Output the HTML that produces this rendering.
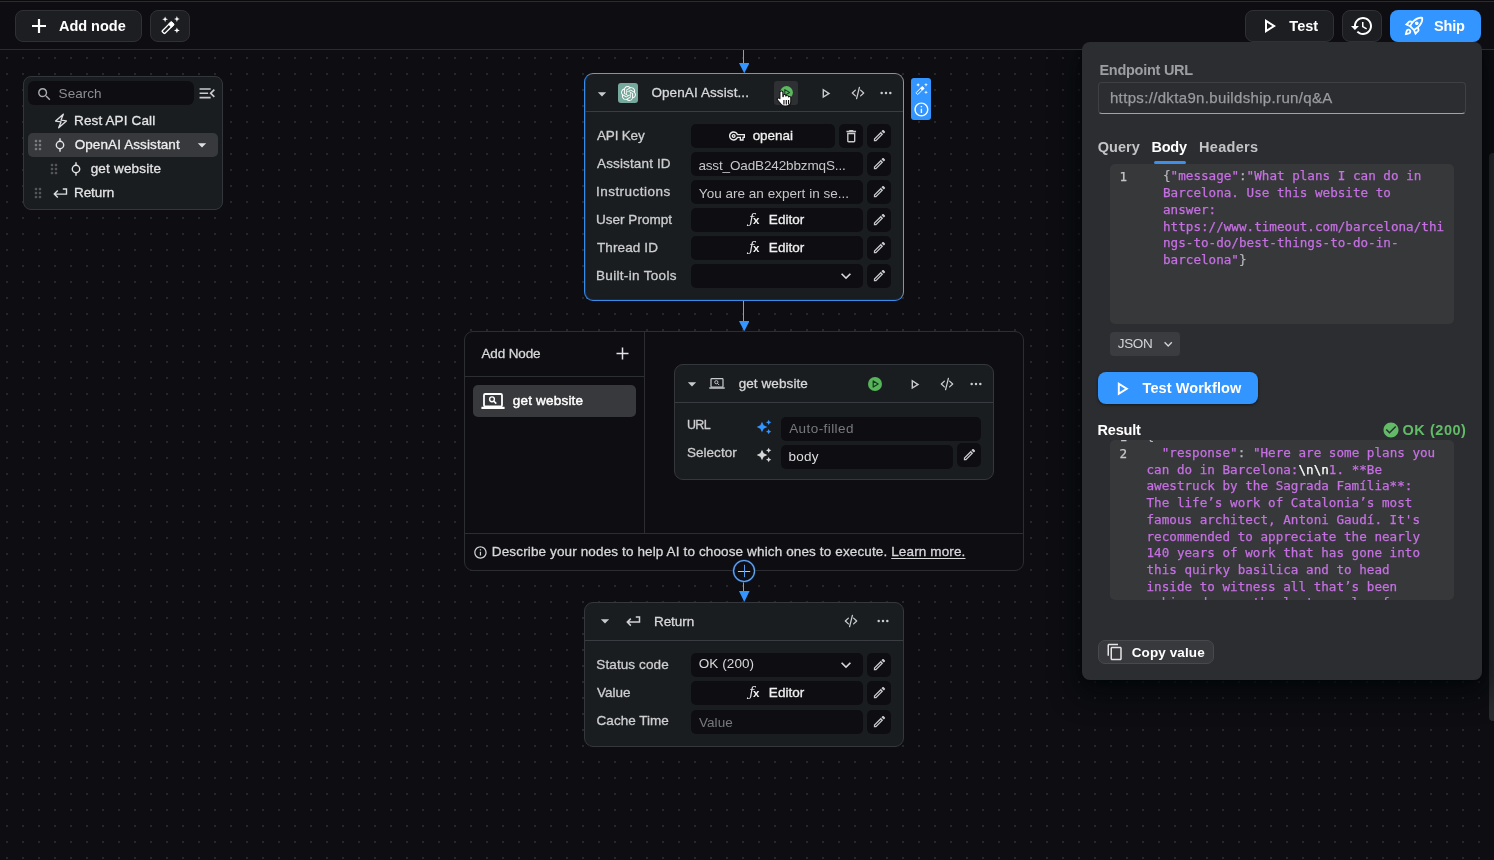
<!DOCTYPE html>
<html lang="en"><head><meta charset="utf-8"><title>Workflow builder</title>
<style>
html,body{margin:0;padding:0;}
body{width:1494px;height:860px;overflow:hidden;background:#0e0e12;font-family:"Liberation Sans", sans-serif;position:relative;}
#root{position:absolute;left:0;top:0;width:1494px;height:860px;will-change:transform;}
.a{position:absolute;display:block;}
.t{position:absolute;white-space:pre;line-height:1;}
.code{position:absolute;white-space:pre;font-family:"DejaVu Sans Mono", "Liberation Mono", monospace;font-size:12.600px;line-height:17px;letter-spacing:0.015px;-webkit-text-stroke:0.250px currentColor;}
#canvas{background-color:#0e0e12;background-image:radial-gradient(circle at 1px 1px,#26272c 0.800px,transparent 1.250px);background-size:16px 16px;background-position:6px 7px;}
</style></head>
<body>
<div id="root">
<div class="a" id="canvas" style="left:0;top:50px;width:1494px;height:810px;"></div>
<div class="a" style="left:23px;top:76px;width:200px;height:134px;background:#1a1d20;border-radius:8px;border:1px solid #33363a;box-sizing:border-box;"></div>
<div class="a" style="left:28px;top:81px;width:166px;height:24px;background:#0e0e12;border-radius:6px;"></div>
<svg class="a" style="left:35.7px;top:85.5px;" width="16.8" height="16.8" viewBox="0 0 24 24"><path d="M15.5 14h-.79l-.28-.27C15.41 12.59 16 11.11 16 9.5 16 5.91 13.09 3 9.5 3S3 5.91 3 9.5 5.91 16 9.5 16c1.61 0 3.09-.59 4.23-1.57l.27.28v.79l5 4.99L20.49 19l-4.99-5zm-6 0C7.01 14 5 11.99 5 9.5S7.01 5 9.5 5 14 7.01 14 9.5 11.99 14 9.5 14z" fill="#a9abae"/></svg>
<span class="t" id="t1" style="left:58.61px;top:87px;font-size:13.5px;font-weight:400;color:#8b8d91;letter-spacing:0.046px;">Search</span>
<svg class="a" style="left:197.4px;top:82.9px;" width="20.5" height="20.5" viewBox="0 0 24 24"><path d="M3 18h13v-2H3v2zm0-5h10v-2H3v2zm0-7v2h13V6H3zm18 9.590L17.420 12 21 8.410 19.590 7l-5 5 5 5L21 15.590z" fill="#c9cacc"/></svg>
<div class="a" style="left:28px;top:133px;width:190px;height:24px;background:#38393c;border-radius:5px;"></div>
<svg class="a" style="left:53.5px;top:113px;" width="14" height="16" viewBox="0 0 14 16"><path d="M9.300 1.200 1.600 8.100 7.100 8.800 4.700 14.800 12.400 7.900 6.900 7.200z" fill="none" stroke="#dcdddf" stroke-width="1.350" stroke-linejoin="round"/></svg>
<span class="t" id="t2" style="left:74.00px;top:114px;font-size:13.5px;font-weight:400;color:#e3e4e5;letter-spacing:0.139px;-webkit-text-stroke:0.3px #e3e4e5;">Rest API Call</span>
<svg class="a" style="left:30px;top:137px;" width="16" height="16" viewBox="0 0 24 24"><path d="M11 18c0 1.100-.9 2-2 2s-2-.9-2-2 .9-2 2-2 2 .9 2 2zm-2-8c-1.100 0-2 .9-2 2s.9 2 2 2 2-.9 2-2-.9-2-2-2zm0-6c-1.100 0-2 .9-2 2s.9 2 2 2 2-.9 2-2-.9-2-2-2zm6 4c1.100 0 2-.9 2-2s-.9-2-2-2-2 .9-2 2 .9 2 2 2zm0 2c-1.100 0-2 .9-2 2s.9 2 2 2 2-.9 2-2-.9-2-2-2zm0 6c-1.100 0-2 .9-2 2s.9 2 2 2 2-.9 2-2-.9-2-2-2z" fill="#7b7d81"/></svg>
<svg class="a" style="left:52.3px;top:137px;" width="16" height="16" viewBox="0 0 16 16"><circle cx="8" cy="8" r="3.700" fill="none" stroke="#e3e4e5" stroke-width="1.400"/><path d="M8 1.200v3.100M8 11.700v3.100" stroke="#e3e4e5" stroke-width="1.400"/></svg>
<span class="t" id="t3" style="left:74.68px;top:138px;font-size:13.5px;font-weight:400;color:#eeeeef;letter-spacing:0.097px;-webkit-text-stroke:0.3px #eeeeef;">OpenAI Assistant</span>
<svg class="a" style="left:191.7px;top:134.9px;" width="20" height="20" viewBox="0 0 24 24"><path d="M7 10l5 5 5-5z" fill="#e0e0e2"/></svg>
<svg class="a" style="left:45.7px;top:161px;" width="16" height="16" viewBox="0 0 24 24"><path d="M11 18c0 1.100-.9 2-2 2s-2-.9-2-2 .9-2 2-2 2 .9 2 2zm-2-8c-1.100 0-2 .9-2 2s.9 2 2 2 2-.9 2-2-.9-2-2-2zm0-6c-1.100 0-2 .9-2 2s.9 2 2 2 2-.9 2-2-.9-2-2-2zm6 4c1.100 0 2-.9 2-2s-.9-2-2-2-2 .9-2 2 .9 2 2 2zm0 2c-1.100 0-2 .9-2 2s.9 2 2 2 2-.9 2-2-.9-2-2-2zm0 6c-1.100 0-2 .9-2 2s.9 2 2 2 2-.9 2-2-.9-2-2-2z" fill="#55575b"/></svg>
<svg class="a" style="left:68.2px;top:160.8px;" width="16" height="16" viewBox="0 0 16 16"><circle cx="8" cy="8" r="3.700" fill="none" stroke="#e3e4e5" stroke-width="1.400"/><path d="M8 1.200v3.100M8 11.700v3.100" stroke="#e3e4e5" stroke-width="1.400"/></svg>
<span class="t" id="t4" style="left:90.64px;top:162px;font-size:13.5px;font-weight:400;color:#e3e4e5;letter-spacing:0.197px;-webkit-text-stroke:0.3px #e3e4e5;">get website</span>
<svg class="a" style="left:30px;top:185px;" width="16" height="16" viewBox="0 0 24 24"><path d="M11 18c0 1.100-.9 2-2 2s-2-.9-2-2 .9-2 2-2 2 .9 2 2zm-2-8c-1.100 0-2 .9-2 2s.9 2 2 2 2-.9 2-2-.9-2-2-2zm0-6c-1.100 0-2 .9-2 2s.9 2 2 2 2-.9 2-2-.9-2-2-2zm6 4c1.100 0 2-.9 2-2s-.9-2-2-2-2 .9-2 2 .9 2 2 2zm0 2c-1.100 0-2 .9-2 2s.9 2 2 2 2-.9 2-2-.9-2-2-2zm0 6c-1.100 0-2 .9-2 2s.9 2 2 2 2-.9 2-2-.9-2-2-2z" fill="#55575b"/></svg>
<svg class="a" style="left:53px;top:187.7px;" width="15" height="11" viewBox="0 0 15 11"><path d="M9.800 1h3.700v5.100H1.400M4.800 2.600 1.300 6.100 4.800 9.600" fill="none" stroke="#dcdddf" stroke-width="1.4" stroke-linejoin="miter"/></svg>
<span class="t" id="t5" style="left:74.00px;top:186px;font-size:13.5px;font-weight:400;color:#e3e4e5;letter-spacing:-0.073px;-webkit-text-stroke:0.3px #e3e4e5;">Return</span>
<div class="a" style="left:743px;top:50px;width:1px;height:13px;background:#9a9c9f;"></div>
<svg class="a" style="left:738.9000000000001px;top:63.0px;" width="10.5" height="10.3" viewBox="0 0 10.500 10.300"><path d="M0 0h10.500L5.250 10.300z" fill="#3395ff"/></svg>
<div class="a" style="left:743px;top:301px;width:1px;height:20px;background:#9a9c9f;"></div>
<svg class="a" style="left:738.9000000000001px;top:321.0px;" width="10.5" height="10.3" viewBox="0 0 10.500 10.300"><path d="M0 0h10.500L5.250 10.300z" fill="#3395ff"/></svg>
<div class="a" style="left:584px;top:73px;width:320px;height:228px;background:#1a1d20;border-radius:9px;border:1px solid #3a8ae8;box-sizing:border-box;border-top-color:#8d9094;border-right-color:#8d9094;box-shadow:inset 1px 0 0 #0d3a78, inset 0 -1px 0 rgba(13,58,120,0.5);"></div>
<div class="a" style="left:585px;top:111px;width:318px;height:1px;background:#393c40;"></div>
<svg class="a" style="left:592px;top:83.5px;" width="20" height="20" viewBox="0 0 24 24"><path d="M7 10l5 5 5-5z" fill="#c9cacc"/></svg>
<div class="a" style="left:618px;top:83px;width:20px;height:20px;background:#76a99b;border-radius:3px;"></div>
<svg class="a" style="left:620.8px;top:85.5px;" width="15" height="15" viewBox="0 0 24 24"><path d="M22.2819 9.8211a5.9847 5.9847 0 0 0-.5157-4.9108 6.0462 6.0462 0 0 0-6.5098-2.9A6.0651 6.0651 0 0 0 4.9807 4.1818a5.9847 5.9847 0 0 0-3.9977 2.9 6.0462 6.0462 0 0 0 .7427 7.0966 5.98 5.98 0 0 0 .511 4.9107 6.051 6.051 0 0 0 6.5146 2.9001A5.9847 5.9847 0 0 0 13.2599 24a6.0557 6.0557 0 0 0 5.7718-4.2058 5.9894 5.9894 0 0 0 3.9977-2.9001 6.0557 6.0557 0 0 0-.7475-7.0729zm-9.022 12.6081a4.4755 4.4755 0 0 1-2.8764-1.0408l.1419-.0804 4.7783-2.7582a.7948.7948 0 0 0 .3927-.6813v-6.7369l2.02 1.1686a.071.071 0 0 1 .038.052v5.5826a4.504 4.504 0 0 1-4.4945 4.4944zm-9.6607-4.1254a4.4708 4.4708 0 0 1-.5346-3.0137l.142.0852 4.783 2.7582a.7712.7712 0 0 0 .7806 0l5.8428-3.3685v2.3324a.0804.0804 0 0 1-.0332.0615L9.74 19.9502a4.4992 4.4992 0 0 1-6.1408-1.6464zM2.3408 7.8956a4.485 4.485 0 0 1 2.3655-1.9728V11.6a.7664.7664 0 0 0 .3879.6765l5.8144 3.3543-2.0201 1.1685a.0757.0757 0 0 1-.071 0l-4.8303-2.7865A4.504 4.504 0 0 1 2.3408 7.872zm16.5963 3.8558L13.1038 8.364 15.1192 7.2a.0757.0757 0 0 1 .071 0l4.8303 2.7913a4.4944 4.4944 0 0 1-.6765 8.1042v-5.6772a.79.79 0 0 0-.407-.667zm2.0107-3.0231l-.142-.0852-4.7735-2.7818a.7759.7759 0 0 0-.7854 0L9.409 9.2297V6.8974a.0662.0662 0 0 1 .0284-.0615l4.8303-2.7866a4.4992 4.4992 0 0 1 6.6802 4.66zM8.3065 12.863l-2.02-1.1638a.0804.0804 0 0 1-.038-.0567V6.0742a4.4992 4.4992 0 0 1 7.3757-3.4537l-.142.0805L8.704 5.459a.7948.7948 0 0 0-.3927.6813zm1.0976-2.3654l2.602-1.4998 2.6069 1.4998v2.9994l-2.5974 1.4997-2.6067-1.4997Z" fill="#ffffff"/></svg>
<span class="t" id="t6" style="left:651.39px;top:86px;font-size:13.5px;font-weight:400;color:#d7d8da;letter-spacing:0.103px;-webkit-text-stroke:0.3px #d7d8da;">OpenAI Assist...</span>
<div class="a" style="left:774px;top:81px;width:24px;height:24px;background:#2e3033;border-radius:3px;"></div>
<svg class="a" style="left:780.4px;top:85.6px;" width="13" height="13" viewBox="0 0 13 13"><circle cx="6.500" cy="6.500" r="6.400" fill="#5cb860"/><path d="M4.800 3.600v5.800L9.600 6.500z" fill="none" stroke="#1e3d20" stroke-width="1.100" stroke-linejoin="round"/></svg>
<svg class="a" style="left:775.5px;top:89.5px;" width="17.5" height="17.3" viewBox="0 0 17 20" preserveAspectRatio="none"><path d="M5.200 1.200c.9 0 1.500.6 1.500 1.500v5l.3 0v-1.200c0-.8.600-1.300 1.300-1.300s1.300.5 1.300 1.300v.7c.1-.6.600-1 1.200-1 .7 0 1.300.5 1.300 1.300v.6c.2-.4.600-.7 1.100-.7.700 0 1.200.5 1.200 1.300v4.500c0 3.200-1.800 5.300-4.900 5.300H9c-2 0-3.200-.8-4.300-2.400L1.500 11.600c-.5-.7-.4-1.500.2-2 .6-.4 1.400-.3 1.900.3l.2.300V2.700c0-.9.600-1.500 1.400-1.500z" fill="#fff" stroke="#111" stroke-width="1.100" stroke-linejoin="round"/><path d="M7.700 11.500v5.300M10 11.500v5.300M12.200 11.500v5.300" stroke="#111" stroke-width="1.100"/></svg>
<svg class="a" style="left:817.2px;top:84.89999999999999px;" width="16.8" height="16.8" viewBox="0 0 24 24"><path d="M10 8.64L15.27 12 10 15.36V8.64M8 5v14l11-7L8 5z" fill="#c9cacc"/></svg>
<svg class="a" style="left:851px;top:86.3px;" width="14" height="14" viewBox="0 0 14 14"><path d="M4.400 4.100 1.300 7l3.100 2.900M9.600 4.100 12.700 7l-3.100 2.900M8.400 1.300 5.600 12.700" fill="none" stroke="#c9cacc" stroke-width="1.300" stroke-linecap="round" stroke-linejoin="round"/></svg>
<svg class="a" style="left:880px;top:91.3px;" width="12" height="4" viewBox="0 0 12 4"><circle cx="1.700" cy="2" r="1.250" fill="#c9cacc"/><circle cx="6" cy="2" r="1.250" fill="#c9cacc"/><circle cx="10.300" cy="2" r="1.250" fill="#c9cacc"/></svg>
<div class="a" style="left:911px;top:78px;width:20px;height:42px;background:#3395ff;border-radius:3px;"></div>
<svg class="a" style="left:911.85px;top:79.85px;" width="18.76" height="18.76" viewBox="0 0 28 28"><g transform="translate(11.850 15.850) rotate(-45)"><rect x="-6.600" y="-1.850" width="13.200" height="3.700" rx="0.700" fill="none" stroke="#ffffff" stroke-width="1.350"/><rect x="2.600" y="-2.400" width="4.650" height="4.800" rx="0.700" fill="#ffffff"/></g><path d="M9.1 4.4L9.88 6.52L12.0 7.3L9.88 8.08L9.1 10.2L8.32 8.08L6.199999999999999 7.3L8.32 6.52Z" fill="#ffffff"/><path d="M20.9 4.1L21.68 6.22L23.799999999999997 7.0L21.68 7.78L20.9 9.9L20.12 7.78L18.0 7.0L20.12 6.22Z" fill="#ffffff"/><path d="M20.9 15.499999999999998L21.68 17.62L23.799999999999997 18.4L21.68 19.18L20.9 21.299999999999997L20.12 19.18L18.0 18.4L20.12 17.62Z" fill="#ffffff"/></svg>
<svg class="a" style="left:912.6px;top:100.7px;" width="16.8" height="16.8" viewBox="0 0 24 24"><path d="M11 7h2v2h-2zm0 4h2v6h-2zm1-9C6.48 2 2 6.48 2 12s4.48 10 10 10 10-4.48 10-10S17.52 2 12 2zm0 18c-4.410 0-8-3.590-8-8s3.590-8 8-8 8 3.590 8 8-3.590 8-8 8z" fill="#ffffff"/></svg>
<span class="t" id="t7" style="left:597.00px;top:129px;font-size:13.5px;font-weight:400;color:#cdced0;letter-spacing:-0.179px;-webkit-text-stroke:0.3px #cdced0;">API Key</span>
<div class="a" style="left:691px;top:124px;width:144px;height:24px;background:#0e0e12;border-radius:5px;"></div>
<div class="a" style="left:839px;top:124px;width:24px;height:24px;background:#0e0e12;border-radius:5px;"></div>
<svg class="a" style="left:842.7px;top:127.9px;" width="16.5" height="16.5" viewBox="0 0 24 24"><path d="M16 9v10H8V9h8m-1.500-6h-5l-1 1H5v2h14V4h-3.500l-1-1zM18 7H6v12c0 1.100.9 2 2 2h8c1.100 0 2-.9 2-2V7z" fill="#c9cacc"/></svg>
<div class="a" style="left:867px;top:124px;width:24px;height:24px;background:#0e0e12;border-radius:5px;"></div>
<svg class="a" style="left:871.7px;top:128.3px;" width="15" height="15" viewBox="0 0 24 24"><path d="M14.06 9.02l.92.92L5.92 19H5v-.92l9.06-9.06M17.66 3c-.25 0-.51.1-.7.29l-1.83 1.83 3.75 3.75 1.83-1.83c.39-.39.39-1.02 0-1.41l-2.34-2.34c-.2-.2-.45-.29-.71-.29zm-3.6 3.19L3 17.25V21h3.75L17.81 9.94l-3.75-3.75z" fill="#c9cacc"/></svg>
<span class="t" id="t8" style="left:597.00px;top:157px;font-size:13.5px;font-weight:400;color:#cdced0;letter-spacing:0.140px;-webkit-text-stroke:0.3px #cdced0;">Assistant ID</span>
<div class="a" style="left:691px;top:152px;width:172px;height:24px;background:#0e0e12;border-radius:5px;"></div>
<div class="a" style="left:867px;top:152px;width:24px;height:24px;background:#0e0e12;border-radius:5px;"></div>
<svg class="a" style="left:871.7px;top:156.3px;" width="15" height="15" viewBox="0 0 24 24"><path d="M14.06 9.02l.92.92L5.92 19H5v-.92l9.06-9.06M17.66 3c-.25 0-.51.1-.7.29l-1.83 1.83 3.75 3.75 1.83-1.83c.39-.39.39-1.02 0-1.41l-2.34-2.34c-.2-.2-.45-.29-.71-.29zm-3.6 3.19L3 17.25V21h3.75L17.81 9.94l-3.75-3.75z" fill="#c9cacc"/></svg>
<span class="t" id="t9" style="left:596.00px;top:185px;font-size:13.5px;font-weight:400;color:#cdced0;letter-spacing:0.464px;-webkit-text-stroke:0.3px #cdced0;">Instructions</span>
<div class="a" style="left:691px;top:180px;width:172px;height:24px;background:#0e0e12;border-radius:5px;"></div>
<div class="a" style="left:867px;top:180px;width:24px;height:24px;background:#0e0e12;border-radius:5px;"></div>
<svg class="a" style="left:871.7px;top:184.3px;" width="15" height="15" viewBox="0 0 24 24"><path d="M14.06 9.02l.92.92L5.92 19H5v-.92l9.06-9.06M17.66 3c-.25 0-.51.1-.7.29l-1.83 1.83 3.75 3.75 1.83-1.83c.39-.39.39-1.02 0-1.41l-2.34-2.34c-.2-.2-.45-.29-.71-.29zm-3.6 3.19L3 17.25V21h3.75L17.81 9.94l-3.75-3.75z" fill="#c9cacc"/></svg>
<span class="t" id="t10" style="left:596.00px;top:213px;font-size:13.5px;font-weight:400;color:#cdced0;letter-spacing:0.021px;-webkit-text-stroke:0.3px #cdced0;">User Prompt</span>
<div class="a" style="left:691px;top:208px;width:172px;height:24px;background:#0e0e12;border-radius:5px;"></div>
<div class="a" style="left:867px;top:208px;width:24px;height:24px;background:#0e0e12;border-radius:5px;"></div>
<svg class="a" style="left:871.7px;top:212.3px;" width="15" height="15" viewBox="0 0 24 24"><path d="M14.06 9.02l.92.92L5.92 19H5v-.92l9.06-9.06M17.66 3c-.25 0-.51.1-.7.29l-1.83 1.83 3.75 3.75 1.83-1.83c.39-.39.39-1.02 0-1.41l-2.34-2.34c-.2-.2-.45-.29-.71-.29zm-3.6 3.19L3 17.25V21h3.75L17.81 9.94l-3.75-3.75z" fill="#c9cacc"/></svg>
<span class="t" id="t11" style="left:597.00px;top:241px;font-size:13.5px;font-weight:400;color:#cdced0;letter-spacing:0.112px;-webkit-text-stroke:0.3px #cdced0;">Thread ID</span>
<div class="a" style="left:691px;top:236px;width:172px;height:24px;background:#0e0e12;border-radius:5px;"></div>
<div class="a" style="left:867px;top:236px;width:24px;height:24px;background:#0e0e12;border-radius:5px;"></div>
<svg class="a" style="left:871.7px;top:240.3px;" width="15" height="15" viewBox="0 0 24 24"><path d="M14.06 9.02l.92.92L5.92 19H5v-.92l9.06-9.06M17.66 3c-.25 0-.51.1-.7.29l-1.83 1.83 3.75 3.75 1.83-1.83c.39-.39.39-1.02 0-1.41l-2.34-2.34c-.2-.2-.45-.29-.71-.29zm-3.6 3.19L3 17.25V21h3.75L17.81 9.94l-3.75-3.75z" fill="#c9cacc"/></svg>
<span class="t" id="t12" style="left:596.00px;top:269px;font-size:13.5px;font-weight:400;color:#cdced0;letter-spacing:0.320px;-webkit-text-stroke:0.3px #cdced0;">Built-in Tools</span>
<div class="a" style="left:691px;top:264px;width:172px;height:24px;background:#0e0e12;border-radius:5px;"></div>
<div class="a" style="left:867px;top:264px;width:24px;height:24px;background:#0e0e12;border-radius:5px;"></div>
<svg class="a" style="left:871.7px;top:268.3px;" width="15" height="15" viewBox="0 0 24 24"><path d="M14.06 9.02l.92.92L5.92 19H5v-.92l9.06-9.06M17.66 3c-.25 0-.51.1-.7.29l-1.83 1.83 3.75 3.75 1.83-1.83c.39-.39.39-1.02 0-1.41l-2.34-2.34c-.2-.2-.45-.29-.71-.29zm-3.6 3.19L3 17.25V21h3.75L17.81 9.94l-3.75-3.75z" fill="#c9cacc"/></svg>
<svg class="a" style="left:729.1px;top:128px;" width="16" height="16" viewBox="0 0 24 24"><path d="M22 19h-6v-4h-2.680c-1.140 2.420-3.600 4-6.320 4-3.860 0-7-3.140-7-7s3.140-7 7-7c2.720 0 5.170 1.580 6.320 4H24v6h-2v4zm-4-2h2v-4h2v-2H11.940l-.23-.67C11.010 8.340 9.110 7 7 7c-2.760 0-5 2.240-5 5s2.240 5 5 5c2.110 0 4.010-1.340 4.710-3.330l.23-.67H18v4zM7 15c-1.650 0-3-1.350-3-3s1.350-3 3-3 3 1.350 3 3-1.350 3-3 3zm0-4c-.55 0-1 .45-1 1s.45 1 1 1 1-.45 1-1-.45-1-1-1z" fill="#ececed"/></svg>
<span class="t" id="t13" style="left:752.64px;top:129px;font-size:13.5px;font-weight:400;color:#f0f0f1;letter-spacing:-0.034px;-webkit-text-stroke:0.3px #f0f0f1;">openai</span>
<span class="t" id="t14" style="left:698.38px;top:159px;font-size:13.5px;font-weight:400;color:#c6c7c9;letter-spacing:-0.133px;">asst_OadB242bbzmqS...</span>
<span class="t" id="t15" style="left:698.85px;top:187px;font-size:13.5px;font-weight:400;color:#c6c7c9;letter-spacing:0.025px;">You are an expert in se...</span>
<span class="t" style="left:749.3px;top:212px;font-family:'DejaVu Serif',serif;font-style:italic;font-size:13px;color:#e6e6e8">ƒ</span>
<span class="t" style="left:753.1px;top:215px;font-family:'Liberation Sans',sans-serif;font-weight:700;font-size:11.500px;color:#f2f2f3">x</span>
<span class="t" id="t16" style="left:768.85px;top:213px;font-size:13.5px;font-weight:400;color:#f0f0f1;letter-spacing:0.031px;-webkit-text-stroke:0.3px #f0f0f1;">Editor</span>
<span class="t" style="left:749.3px;top:240px;font-family:'DejaVu Serif',serif;font-style:italic;font-size:13px;color:#e6e6e8">ƒ</span>
<span class="t" style="left:753.1px;top:243px;font-family:'Liberation Sans',sans-serif;font-weight:700;font-size:11.500px;color:#f2f2f3">x</span>
<span class="t" id="t17" style="left:768.85px;top:241px;font-size:13.5px;font-weight:400;color:#f0f0f1;letter-spacing:0.031px;-webkit-text-stroke:0.3px #f0f0f1;">Editor</span>
<svg class="a" style="left:836px;top:266px;" width="20" height="20" viewBox="0 0 24 24"><path d="M16.59 8.59L12 13.17 7.41 8.59 6 10l6 6 6-6z" fill="#d6d7d9"/></svg>
<div class="a" style="left:464px;top:331px;width:560px;height:240px;background:#0e0e12;border-radius:9px;border:1px solid #2c2e32;box-sizing:border-box;"></div>
<div class="a" style="left:644px;top:332px;width:1px;height:201px;background:#2c2e32;"></div>
<div class="a" style="left:465px;top:376px;width:179px;height:1px;background:#2c2e32;"></div>
<div class="a" style="left:465px;top:533px;width:558px;height:1px;background:#2c2e32;"></div>
<span class="t" id="t18" style="left:481.44px;top:347px;font-size:13.5px;font-weight:400;color:#d7d8da;letter-spacing:-0.127px;-webkit-text-stroke:0.3px #d7d8da;">Add Node</span>
<svg class="a" style="left:616px;top:347px;" width="13" height="13" viewBox="0 0 13 13"><path d="M6.500 0.500v12M0.500 6.500h12" stroke="#e3e4e5" stroke-width="1.500" fill="none"/></svg>
<div class="a" style="left:473px;top:385px;width:163px;height:32px;background:#38393c;border-radius:5px;"></div>
<svg class="a" style="left:481px;top:392.5px;" width="24" height="17.0" viewBox="0 0 24 17"><rect x="3" y="1" width="18" height="12.500" rx="1.200" fill="none" stroke="#ffffff" stroke-width="1.800"/><rect x="0.400" y="13.700" width="23.200" height="2.400" rx="0.300" fill="#ffffff"/><circle cx="11" cy="6.300" r="2.400" fill="none" stroke="#ffffff" stroke-width="1.400"/><path d="M12.800 8.100 15.300 10.600" stroke="#ffffff" stroke-width="1.500"/></svg>
<span class="t" id="t19" style="left:512.82px;top:394px;font-size:13.5px;font-weight:400;color:#ffffff;letter-spacing:0.194px;-webkit-text-stroke:0.45px #ffffff;">get website</span>
<div class="a" style="left:674px;top:364px;width:320px;height:116px;background:#1a1d20;border-radius:9px;border:1px solid #34373b;box-sizing:border-box;"></div>
<div class="a" style="left:675px;top:402px;width:318px;height:1px;background:#393c40;"></div>
<svg class="a" style="left:682px;top:374.2px;" width="20" height="20" viewBox="0 0 24 24"><path d="M7 10l5 5 5-5z" fill="#c9cacc"/></svg>
<svg class="a" style="left:709px;top:378.3px;" width="16" height="11.33" viewBox="0 0 24 17"><rect x="3" y="1" width="18" height="12.500" rx="1.200" fill="none" stroke="#c9cacc" stroke-width="1.800"/><rect x="0.400" y="13.700" width="23.200" height="2.400" rx="0.300" fill="#c9cacc"/><circle cx="11" cy="6.300" r="2.400" fill="none" stroke="#c9cacc" stroke-width="1.400"/><path d="M12.800 8.100 15.300 10.600" stroke="#c9cacc" stroke-width="1.500"/></svg>
<span class="t" id="t20" style="left:738.64px;top:377px;font-size:13.5px;font-weight:400;color:#d7d8da;letter-spacing:0.096px;-webkit-text-stroke:0.3px #d7d8da;">get website</span>
<svg class="a" style="left:868.3px;top:377.2px;" width="14" height="14" viewBox="0 0 14 14"><circle cx="7" cy="7" r="7" fill="#56b45a"/><path d="M5.200 3.900v6.200L10.200 7z" fill="none" stroke="#173a1a" stroke-width="1.200" stroke-linejoin="round"/></svg>
<svg class="a" style="left:906.3px;top:375.8px;" width="16.8" height="16.8" viewBox="0 0 24 24"><path d="M10 8.64L15.27 12 10 15.36V8.64M8 5v14l11-7L8 5z" fill="#c9cacc"/></svg>
<svg class="a" style="left:940px;top:377.2px;" width="14" height="14" viewBox="0 0 14 14"><path d="M4.400 4.100 1.300 7l3.100 2.900M9.600 4.100 12.700 7l-3.100 2.900M8.400 1.300 5.600 12.700" fill="none" stroke="#c9cacc" stroke-width="1.300" stroke-linecap="round" stroke-linejoin="round"/></svg>
<svg class="a" style="left:970.2px;top:382.2px;" width="12" height="4" viewBox="0 0 12 4"><circle cx="1.700" cy="2" r="1.250" fill="#c9cacc"/><circle cx="6" cy="2" r="1.250" fill="#c9cacc"/><circle cx="10.300" cy="2" r="1.250" fill="#c9cacc"/></svg>
<span class="t" id="t21" style="left:686.95px;top:419px;font-size:12.5px;font-weight:400;color:#cdced0;letter-spacing:-0.590px;-webkit-text-stroke:0.3px #cdced0;">URL</span>
<span class="t" id="t22" style="left:686.92px;top:446px;font-size:13.5px;font-weight:400;color:#cdced0;letter-spacing:0.043px;-webkit-text-stroke:0.3px #cdced0;">Selector</span>
<svg class="a" style="left:756.3px;top:418.5px;" width="16" height="16" viewBox="0 0 24 24"><path d="M19 9l1.250-2.750L23 5l-2.750-1.250L19 1l-1.250 2.750L15 5l2.750 1.250L19 9zm-7.500.5L9 4 6.500 9.500 1 12l5.500 2.500L9 20l2.500-5.500L17 12l-5.500-2.500zM19 15l-1.250 2.750L15 19l2.750 1.250L19 23l1.250-2.750L23 19l-2.750-1.250L19 15z" fill="#3395ff"/></svg>
<svg class="a" style="left:756.3px;top:446.5px;" width="16" height="16" viewBox="0 0 24 24"><path d="M19 9l1.250-2.750L23 5l-2.750-1.250L19 1l-1.250 2.750L15 5l2.750 1.250L19 9zm-7.500.5L9 4 6.500 9.500 1 12l5.500 2.500L9 20l2.500-5.500L17 12l-5.500-2.500zM19 15l-1.250 2.750L15 19l2.750 1.250L19 23l1.250-2.750L23 19l-2.750-1.250L19 15z" fill="#d6d7d9"/></svg>
<div class="a" style="left:781px;top:417px;width:200px;height:24px;background:#0e0e12;border-radius:5px;"></div>
<div class="a" style="left:781px;top:445px;width:172px;height:24px;background:#0e0e12;border-radius:5px;"></div>
<div class="a" style="left:957px;top:443px;width:24px;height:24px;background:#0e0e12;border-radius:5px;"></div>
<svg class="a" style="left:961.7px;top:447.3px;" width="15" height="15" viewBox="0 0 24 24"><path d="M14.06 9.02l.92.92L5.92 19H5v-.92l9.06-9.06M17.66 3c-.25 0-.51.1-.7.29l-1.83 1.83 3.75 3.75 1.83-1.83c.39-.39.39-1.02 0-1.41l-2.34-2.34c-.2-.2-.45-.29-.71-.29zm-3.6 3.19L3 17.25V21h3.75L17.81 9.94l-3.75-3.75z" fill="#c9cacc"/></svg>
<span class="t" id="t23" style="left:789.19px;top:422px;font-size:13.5px;font-weight:400;color:#77797d;letter-spacing:0.418px;">Auto-filled</span>
<span class="t" id="t24" style="left:788.52px;top:450px;font-size:13.5px;font-weight:400;color:#dcdddf;letter-spacing:0.274px;">body</span>
<svg class="a" style="left:473px;top:545px;" width="14.9" height="14.9" viewBox="0 0 24 24"><path d="M11 7h2v2h-2zm0 4h2v6h-2zm1-9C6.48 2 2 6.48 2 12s4.48 10 10 10 10-4.48 10-10S17.52 2 12 2zm0 18c-4.410 0-8-3.590-8-8s3.590-8 8-8 8 3.590 8 8-3.590 8-8 8z" fill="#d0d1d3"/></svg>
<span class="t" id="t25" style="left:491.85px;top:545px;font-size:13.5px;font-weight:400;color:#d7d8da;letter-spacing:0.131px;-webkit-text-stroke:0.3px #d7d8da;">Describe your nodes to help AI to choose which ones to execute. <span style="text-decoration:underline;text-underline-offset:2px">Learn more.</span></span>
<div class="a" style="left:743px;top:582px;width:1px;height:10px;background:#9a9c9f;"></div>
<svg class="a" style="left:739px;top:591.3px;" width="10.6" height="11" viewBox="0 0 10.600 11"><path d="M0 0h10.600L5.300 11z" fill="#3395ff"/></svg>
<svg class="a" style="left:732px;top:559px;" width="24" height="24" viewBox="0 0 24 24"><circle cx="12.060" cy="12" r="10.500" fill="#0e0e12" stroke="#0d3a78" stroke-width="2.200"/><circle cx="12.060" cy="12" r="10.500" fill="none" stroke="#6ea6e6" stroke-width="1.100"/><path d="M5.900 12.500h12.300" stroke="#c4c6c9" stroke-width="1"/><path d="M12.500 5.800v12.400" stroke="#4f9df0" stroke-width="1"/></svg>
<div class="a" style="left:584px;top:602px;width:320px;height:145px;background:#1a1d20;border-radius:9px;border:1px solid #34373b;box-sizing:border-box;"></div>
<div class="a" style="left:585px;top:640px;width:318px;height:1px;background:#393c40;"></div>
<svg class="a" style="left:595px;top:611px;" width="20" height="20" viewBox="0 0 24 24"><path d="M7 10l5 5 5-5z" fill="#c9cacc"/></svg>
<svg class="a" style="left:626px;top:615.7px;" width="15" height="11" viewBox="0 0 15 11"><path d="M9.800 1h3.700v5.100H1.400M4.800 2.600 1.300 6.100 4.800 9.600" fill="none" stroke="#d0d1d3" stroke-width="1.5" stroke-linejoin="miter"/></svg>
<span class="t" id="t26" style="left:654.00px;top:615px;font-size:13.5px;font-weight:400;color:#d7d8da;letter-spacing:-0.073px;-webkit-text-stroke:0.3px #d7d8da;">Return</span>
<svg class="a" style="left:844px;top:613.8px;" width="14" height="14" viewBox="0 0 14 14"><path d="M4.400 4.100 1.300 7l3.100 2.900M9.600 4.100 12.700 7l-3.100 2.900M8.400 1.300 5.600 12.700" fill="none" stroke="#c9cacc" stroke-width="1.300" stroke-linecap="round" stroke-linejoin="round"/></svg>
<svg class="a" style="left:877px;top:618.8px;" width="12" height="4" viewBox="0 0 12 4"><circle cx="1.700" cy="2" r="1.250" fill="#c9cacc"/><circle cx="6" cy="2" r="1.250" fill="#c9cacc"/><circle cx="10.300" cy="2" r="1.250" fill="#c9cacc"/></svg>
<span class="t" id="t27" style="left:596.33px;top:658px;font-size:13.5px;font-weight:400;color:#cdced0;letter-spacing:0.102px;-webkit-text-stroke:0.3px #cdced0;">Status code</span>
<div class="a" style="left:691px;top:653px;width:172px;height:24px;background:#0e0e12;border-radius:5px;"></div>
<div class="a" style="left:867px;top:653px;width:24px;height:24px;background:#0e0e12;border-radius:5px;"></div>
<svg class="a" style="left:871.7px;top:657.3px;" width="15" height="15" viewBox="0 0 24 24"><path d="M14.06 9.02l.92.92L5.92 19H5v-.92l9.06-9.06M17.66 3c-.25 0-.51.1-.7.29l-1.83 1.83 3.75 3.75 1.83-1.83c.39-.39.39-1.02 0-1.41l-2.34-2.34c-.2-.2-.45-.29-.71-.29zm-3.6 3.19L3 17.25V21h3.75L17.81 9.94l-3.75-3.75z" fill="#c9cacc"/></svg>
<span class="t" id="t28" style="left:597.00px;top:686px;font-size:13.5px;font-weight:400;color:#cdced0;letter-spacing:0.022px;-webkit-text-stroke:0.3px #cdced0;">Value</span>
<div class="a" style="left:691px;top:681px;width:172px;height:24px;background:#0e0e12;border-radius:5px;"></div>
<div class="a" style="left:867px;top:681px;width:24px;height:24px;background:#0e0e12;border-radius:5px;"></div>
<svg class="a" style="left:871.7px;top:685.3px;" width="15" height="15" viewBox="0 0 24 24"><path d="M14.06 9.02l.92.92L5.92 19H5v-.92l9.06-9.06M17.66 3c-.25 0-.51.1-.7.29l-1.83 1.83 3.75 3.75 1.83-1.83c.39-.39.39-1.02 0-1.41l-2.34-2.34c-.2-.2-.45-.29-.71-.29zm-3.6 3.19L3 17.25V21h3.75L17.81 9.94l-3.75-3.75z" fill="#c9cacc"/></svg>
<span class="t" id="t29" style="left:596.59px;top:714px;font-size:13.5px;font-weight:400;color:#cdced0;letter-spacing:0.022px;-webkit-text-stroke:0.3px #cdced0;">Cache Time</span>
<div class="a" style="left:691px;top:710px;width:172px;height:24px;background:#0e0e12;border-radius:5px;"></div>
<div class="a" style="left:867px;top:710px;width:24px;height:24px;background:#0e0e12;border-radius:5px;"></div>
<svg class="a" style="left:871.7px;top:714.3px;" width="15" height="15" viewBox="0 0 24 24"><path d="M14.06 9.02l.92.92L5.92 19H5v-.92l9.06-9.06M17.66 3c-.25 0-.51.1-.7.29l-1.83 1.83 3.75 3.75 1.83-1.83c.39-.39.39-1.02 0-1.41l-2.34-2.34c-.2-.2-.45-.29-.71-.29zm-3.6 3.19L3 17.25V21h3.75L17.81 9.94l-3.75-3.75z" fill="#c9cacc"/></svg>
<span class="t" id="t30" style="left:698.80px;top:657px;font-size:13.5px;font-weight:400;color:#d7d8da;letter-spacing:0.074px;">OK (200)</span>
<svg class="a" style="left:836px;top:654.5px;" width="20" height="20" viewBox="0 0 24 24"><path d="M16.59 8.59L12 13.17 7.41 8.59 6 10l6 6 6-6z" fill="#d6d7d9"/></svg>
<span class="t" style="left:749.3px;top:685px;font-family:'DejaVu Serif',serif;font-style:italic;font-size:13px;color:#e6e6e8">ƒ</span>
<span class="t" style="left:753.1px;top:688px;font-family:'Liberation Sans',sans-serif;font-weight:700;font-size:11.500px;color:#f2f2f3">x</span>
<span class="t" id="t31" style="left:768.85px;top:686px;font-size:13.5px;font-weight:400;color:#f0f0f1;letter-spacing:0.031px;-webkit-text-stroke:0.3px #f0f0f1;">Editor</span>
<span class="t" id="t32" style="left:699.02px;top:716px;font-size:13.5px;font-weight:400;color:#77797d;letter-spacing:0.042px;">Value</span>
<div class="a" style="left:1489px;top:153px;width:6px;height:568px;background:#2a2b2e;border-radius:4px 0 0 4px;"></div>
<div class="a" style="left:1082px;top:42px;width:400px;height:638px;border-radius:8px;box-shadow:0 10px 26px 6px rgba(3,6,9,0.800), 0 0 5px rgba(0,0,0,0.550);"></div>
<div class="a" style="left:0px;top:0px;width:1494px;height:50px;background:#0e0e12;"></div>
<div class="a" style="left:0px;top:0px;width:1494px;height:1px;background:#0a0a0d;"></div>
<div class="a" style="left:0px;top:1px;width:1494px;height:1px;background:#2b2c30;"></div>
<div class="a" style="left:0px;top:49px;width:1494px;height:1px;background:#2b2c30;"></div>
<div class="a" style="left:1082px;top:42px;width:400px;height:638px;background:#2c2d31;border-radius:8px;"></div>
<span class="t" id="t33" style="left:1099.44px;top:63px;font-size:14.5px;font-weight:700;color:#9d9ea1;letter-spacing:-0.266px;">Endpoint URL</span>
<div class="a" style="left:1098px;top:82px;width:368px;height:32px;border-radius:4px;border:1px solid #3f4044;box-sizing:border-box;border-bottom-color:#a2a3a5;"></div>
<span class="t" id="t34" style="left:1109.94px;top:90px;font-size:15px;font-weight:400;color:#9a9b9e;letter-spacing:0.340px;-webkit-text-stroke:0.25px #9a9b9e;">https://dkta9n.buildship.run/q&amp;A</span>
<span class="t" id="t35" style="left:1097.84px;top:140px;font-size:14.5px;font-weight:700;color:#c3c4c6;letter-spacing:-0.010px;">Query</span>
<span class="t" id="t36" style="left:1151.57px;top:140px;font-size:14.5px;font-weight:700;color:#ffffff;letter-spacing:-0.280px;">Body</span>
<span class="t" id="t37" style="left:1199.00px;top:140px;font-size:14.5px;font-weight:700;color:#c3c4c6;letter-spacing:0.307px;">Headers</span>
<div class="a" style="left:1153.8px;top:161.2px;width:32.4px;height:3px;background:#3f8fe6;border-radius:1.5px;"></div>
<div class="a" style="left:1110px;top:164px;width:344px;height:160px;background:#36383a;border-radius:5px;overflow:hidden;"><div class="code" style="left:9.40px;top:4px;color:#c6c7ca">1</div><div class="code" style="left:53.00px;top:3px;color:#c670e3"><span style="color:#b4b6ba">{</span>"message"<span style="color:#b4b6ba">:</span>"What plans I can do in</div><div class="code" style="left:53.00px;top:20px;color:#c670e3">Barcelona. Use this website to</div><div class="code" style="left:53.00px;top:37px;color:#c670e3">answer:</div><div class="code" style="left:53.00px;top:54px;color:#c670e3">https://www.timeout.com/barcelona/thi</div><div class="code" style="left:53.00px;top:70px;color:#c670e3">ngs-to-do/best-things-to-do-in-</div><div class="code" style="left:53.00px;top:87px;color:#c670e3">barcelona"<span style="color:#b4b6ba">}</span></div></div>
<div class="a" style="left:1110px;top:332px;width:70px;height:24px;background:#3b3c40;border-radius:4px;"></div>
<span class="t" id="t38" style="left:1117.77px;top:337px;font-size:13.5px;font-weight:400;color:#d3d4d6;letter-spacing:-0.350px;">JSON</span>
<svg class="a" style="left:1159.7px;top:335.8px;" width="16.4" height="16.4" viewBox="0 0 24 24"><path d="M16.59 8.59L12 13.17 7.41 8.59 6 10l6 6 6-6z" fill="#d3d4d6"/></svg>
<div class="a" style="left:1098px;top:372px;width:160px;height:32px;background:#3395ff;border-radius:8px;box-shadow:0 1px 3px rgba(0,0,0,0.500);"></div>
<svg class="a" style="left:1110px;top:376.8px;" width="23.5" height="23.5" viewBox="0 0 24 24"><path d="M10 8.64L15.27 12 10 15.36V8.64M8 5v14l11-7L8 5z" fill="#ffffff"/></svg>
<span class="t" id="t39" style="left:1142.58px;top:381px;font-size:14.5px;font-weight:700;color:#ffffff;letter-spacing:0.075px;">Test Workflow</span>
<span class="t" id="t40" style="left:1097.44px;top:423px;font-size:14.5px;font-weight:700;color:#ffffff;letter-spacing:-0.162px;">Result</span>
<svg class="a" style="left:1381.5px;top:421px;" width="18" height="18" viewBox="0 0 24 24"><path d="M12 2C6.48 2 2 6.48 2 12s4.480 10 10 10 10-4.480 10-10S17.520 2 12 2zm-2 15l-5-5 1.410-1.410L10 14.170l7.590-7.590L19 8l-9 9z" fill="#62bb66"/></svg>
<span class="t" id="t41" style="left:1402.52px;top:423px;font-size:14.5px;font-weight:700;color:#62bb66;letter-spacing:0.542px;">OK (200)</span>
<div class="a" style="left:1110px;top:440px;width:344px;height:160px;background:#36383a;border-radius:5px;overflow:hidden;"><div class="code" style="left:9.40px;top:-12px;color:#c6c7ca">1</div><div class="code" style="left:36.50px;top:-13px;color:#c670e3"><span style="color:#b4b6ba">{</span></div><div class="code" style="left:9.40px;top:5px;color:#c6c7ca">2</div><div class="code" style="left:36.50px;top:4px;color:#c670e3">  "response"<span style="color:#b4b6ba">:</span> "Here are some plans you</div><div class="code" style="left:36.50px;top:21px;color:#c670e3">can do in Barcelona:<span style="color:#ffffff">\n\n</span>1. **Be</div><div class="code" style="left:36.50px;top:37px;color:#c670e3">awestruck by the Sagrada Família**:</div><div class="code" style="left:36.50px;top:54px;color:#c670e3">The life’s work of Catalonia’s most</div><div class="code" style="left:36.50px;top:71px;color:#c670e3">famous architect, Antoni Gaudí. It's</div><div class="code" style="left:36.50px;top:88px;color:#c670e3">recommended to appreciate the nearly</div><div class="code" style="left:36.50px;top:104px;color:#c670e3">140 years of work that has gone into</div><div class="code" style="left:36.50px;top:121px;color:#c670e3">this quirky basilica and to head</div><div class="code" style="left:36.50px;top:138px;color:#c670e3">inside to witness all that’s been</div><div class="code" style="left:36.50px;top:154px;color:#c670e3">achieved over the last couple of</div></div>
<div class="a" style="left:1098px;top:640px;width:116px;height:24px;background:#38393c;border-radius:7px;border:1px solid #48494c;box-sizing:border-box;"></div>
<svg class="a" style="left:1105.5px;top:642.5px;" width="18" height="18" viewBox="0 0 24 24"><path d="M16 1H4c-1.100 0-2 .9-2 2v14h2V3h12V1zm3 4H8c-1.100 0-2 .9-2 2v14c0 1.100.9 2 2 2h11c1.100 0 2-.9 2-2V7c0-1.100-.9-2-2-2zm0 16H8V7h11v14z" fill="#e3e4e5"/></svg>
<span class="t" id="t42" style="left:1131.69px;top:646px;font-size:13.5px;font-weight:700;color:#ffffff;letter-spacing:0.111px;">Copy value</span>
<div class="a" style="left:15px;top:10px;width:127px;height:32px;background:#1d1e22;border-radius:8px;border:1px solid #2f3134;box-sizing:border-box;"></div>
<svg class="a" style="left:29px;top:16px;" width="20" height="20" viewBox="0 0 20 20"><path d="M10 3v14M3 10h14" stroke="#fff" stroke-width="2.200" fill="none"/></svg>
<span class="t" id="t43" style="left:58.95px;top:19px;font-size:14.5px;font-weight:700;color:#ffffff;letter-spacing:-0.014px;">Add node</span>
<div class="a" style="left:150px;top:10px;width:40px;height:32px;background:#1d1e22;border-radius:8px;border:1px solid #2f3134;box-sizing:border-box;"></div>
<svg class="a" style="left:156px;top:12px;" width="28.0" height="28.0" viewBox="0 0 28 28"><g transform="translate(11.850 15.850) rotate(-45)"><rect x="-6.600" y="-1.850" width="13.200" height="3.700" rx="0.700" fill="none" stroke="#ffffff" stroke-width="1.350"/><rect x="2.600" y="-2.400" width="4.650" height="4.800" rx="0.700" fill="#ffffff"/></g><path d="M9.1 4.4L9.88 6.52L12.0 7.3L9.88 8.08L9.1 10.2L8.32 8.08L6.199999999999999 7.3L8.32 6.52Z" fill="#ffffff"/><path d="M20.9 4.1L21.68 6.22L23.799999999999997 7.0L21.68 7.78L20.9 9.9L20.12 7.78L18.0 7.0L20.12 6.22Z" fill="#ffffff"/><path d="M20.9 15.499999999999998L21.68 17.62L23.799999999999997 18.4L21.68 19.18L20.9 21.299999999999997L20.12 19.18L18.0 18.4L20.12 17.62Z" fill="#ffffff"/></svg>
<div class="a" style="left:1245px;top:10px;width:89px;height:32px;background:#1d1e22;border-radius:8px;border:1px solid #2f3134;box-sizing:border-box;"></div>
<svg class="a" style="left:1256.8px;top:14px;" width="24" height="24" viewBox="0 0 24 24"><path d="M10 8.64L15.27 12 10 15.36V8.64M8 5v14l11-7L8 5z" fill="#ffffff"/></svg>
<span class="t" id="t44" style="left:1289.32px;top:19px;font-size:14.5px;font-weight:700;color:#ffffff;letter-spacing:0.038px;">Test</span>
<div class="a" style="left:1342px;top:10px;width:40px;height:32px;background:#1d1e22;border-radius:8px;border:1px solid #2f3134;box-sizing:border-box;"></div>
<svg class="a" style="left:1350px;top:13.5px;" width="24" height="24" viewBox="0 0 24 24"><path d="M13 3c-4.970 0-9 4.030-9 9H1l3.890 3.890.07.14L9 12H6c0-3.870 3.130-7 7-7s7 3.130 7 7-3.130 7-7 7c-1.930 0-3.680-.79-4.940-2.060l-1.420 1.420C8.270 19.990 10.510 21 13 21c4.970 0 9-4.030 9-9s-4.030-9-9-9zm-1 5v5l4.280 2.540.72-1.210-3.500-2.080V8H12z" fill="#ffffff"/></svg>
<div class="a" style="left:1390px;top:10px;width:91px;height:32px;background:#3395ff;border-radius:8px;"></div>
<svg class="a" style="left:1403px;top:15px;" width="22" height="22" viewBox="0 0 24 24"><path d="M6 15c-.83 0-1.580.34-2.120.88C2.700 17.060 2 22 2 22s4.940-.7 6.120-1.880C8.660 19.580 9 18.830 9 18c0-1.660-1.340-3-3-3zm.71 3.710c-.28.28-2.170.76-2.170.76s.47-1.880.76-2.170c.17-.19.42-.3.7-.3.55 0 1 .45 1 1 0 .28-.11.53-.29.71zm10.710-5.060c6.360-6.360 4.240-11.310 4.240-11.310S16.710.22 10.350 6.580l-2.490-.5c-.65-.13-1.330.08-1.810.55L2 10.690l5 2.140L11.170 17l2.140 5 4.050-4.050c.47-.47.68-1.150.55-1.810l-.49-2.490zM7.410 10.830l-1.910-.82 1.970-1.970 1.440.29c-.57.83-1.080 1.700-1.500 2.500zm6.580 7.670l-.82-1.910c.8-.42 1.670-.93 2.490-1.500l.29 1.440-1.960 1.970zM16 12.240c-1.320 1.320-3.380 2.400-4.040 2.730l-2.930-2.930c.32-.65 1.400-2.710 2.730-4.040 4.680-4.680 8.230-3.990 8.230-3.990s.69 3.550-3.990 8.230zM15 11c1.100 0 2-.9 2-2s-.9-2-2-2-2 .9-2 2 .9 2 2 2z" fill="#ffffff"/></svg>
<span class="t" id="t45" style="left:1434.02px;top:19px;font-size:14.5px;font-weight:700;color:#ffffff;letter-spacing:-0.173px;">Ship</span>
</div>
</body></html>
